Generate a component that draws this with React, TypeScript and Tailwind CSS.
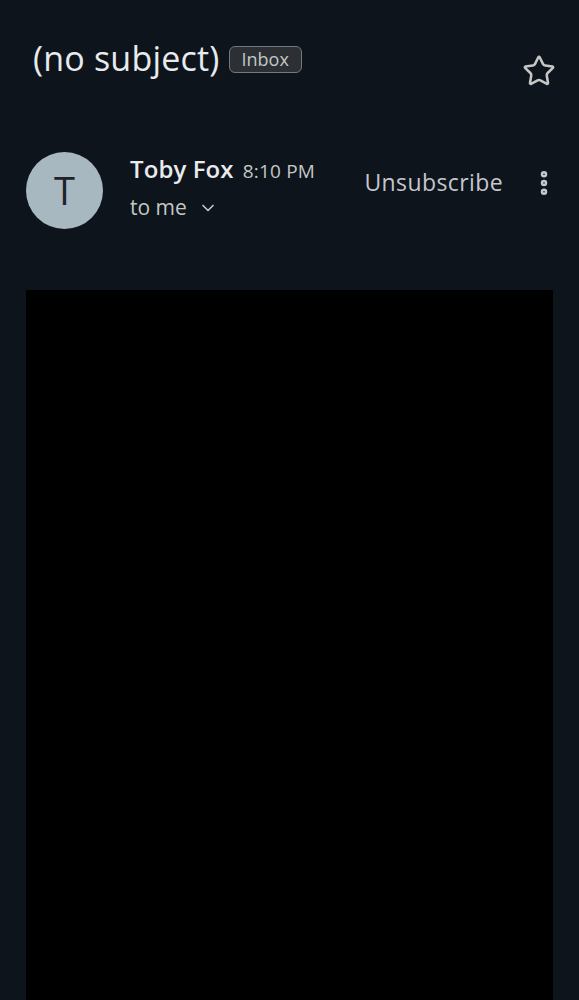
import { Star, ChevronDown, EllipsisVertical } from "lucide-react";

export default function App() {
  return (
    <div
      className="w-[579px] h-[1000px] overflow-hidden bg-[#0e141b] text-[#e3e3e3]"
      style={{ fontFamily: '"Open Sans", Roboto, sans-serif' }}
    >
      {/* subject row */}
      <div className="flex items-start pl-[33px] pr-[23px] pt-[36px] h-[140px]">
        <div className="flex items-center gap-[9px] flex-1">
          <h1 className="text-[34px] leading-[44px] text-[#e8eaed] tracking-[0.2px]">(no subject)</h1>
          <span className="mt-[2px] px-[12px] h-[27px] flex items-center rounded-[6px] border border-[#74777b] bg-[#2c3035] text-[18px] text-[#c4c7c5]">
            Inbox
          </span>
        </div>
        <Star className="mt-[18px] w-[34px] h-[34px] text-[#c4c7c5]" strokeWidth={1.8} />
      </div>

      {/* sender row */}
      <div className="flex items-center pl-[26px] pr-[20px] h-[100px]">
        <div className="w-[77px] h-[77px] rounded-full bg-[#a8b8c1] flex items-center justify-center text-[38px] text-[#1e2328]">
          T
        </div>
        <div className="ml-[27px] flex flex-col flex-1 -mt-[6px]">
          <div className="flex items-baseline gap-[9px]">
            <span className="text-[24px] font-semibold text-[#e8eaed] tracking-[0.1px]">Toby Fox</span>
            <span className="text-[19px] text-[#c4c7c5] tracking-[0.2px]">8:10 PM</span>
          </div>
          <div className="flex items-center gap-[11px] mt-[5px]">
            <span className="text-[21px] text-[#c4c7c5]">to me</span>
            <ChevronDown className="w-[20px] h-[20px] text-[#c4c7c5]" strokeWidth={2} />
          </div>
        </div>
        <span className="text-[23px] font-medium text-[#c4c7cd] tracking-[0.4px] -mt-[16px]">Unsubscribe</span>
        <EllipsisVertical className="ml-[26px] -mt-[14px] w-[30px] h-[30px] text-[#c4c7cd]" strokeWidth={3.2} />
      </div>

      {/* body */}
      <div className="mt-[50px] mx-[26px] h-[800px] bg-black" />
    </div>
  );
}
